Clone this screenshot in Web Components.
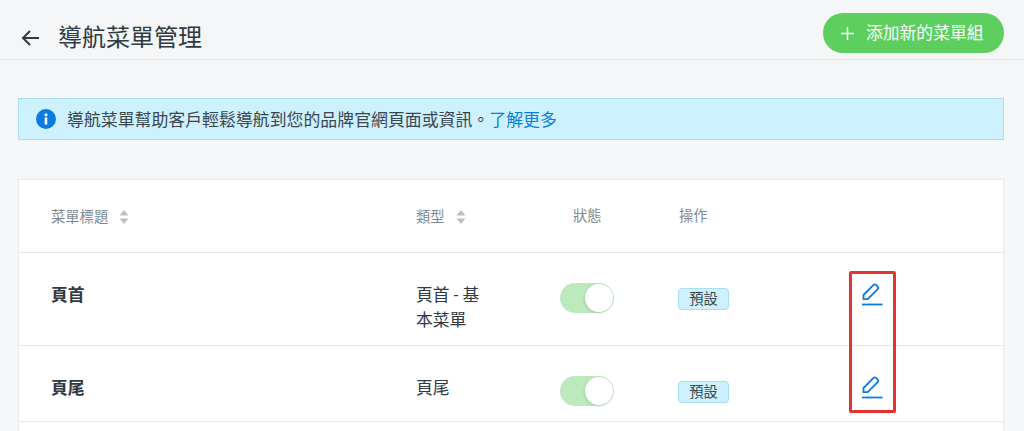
<!DOCTYPE html>
<html lang="zh-Hant"><head><meta charset="utf-8"><style>
html,body{margin:0;height:431px;overflow:hidden;background:#f4f6f8}
body{font-family:Roboto,"Noto Sans CJK TC",sans-serif;color:#2f3a42}
</style></head><body>
<menu-page></menu-page>
<script>
const FONT='Roboto,"Noto Sans CJK TC",sans-serif';
function def(name,html,init){customElements.define(name,class extends HTMLElement{constructor(){super();this.attachShadow({mode:'open'}).innerHTML=html;}connectedCallback(){init&&init(this)}});}
def('page-header',`<style>:host{display:flex;align-items:flex-start;height:59px;border-bottom:1px solid #e3e5e8;padding:0 20px;box-sizing:content-box}
.l{display:flex;align-items:center;flex:1;padding-top:22px}
h1{margin:0 0 0 18px;font:400 24px/32px ${FONT};color:#2f3a42}
svg{display:block}
.btn{display:flex;align-items:center;margin-top:13px;height:40px;width:181px;box-sizing:border-box;padding-left:18px;border-radius:20px;background:#5ccf5f;color:#fff;font:400 16.8px/24px ${FONT};gap:12px}
</style>
<div class="l"><svg width="20" height="20" viewBox="0 0 20 20" fill="none" stroke="#2f3a42" stroke-width="2"><path d="M19 10H3.5M10 3l-7 7 7 7"/></svg>
<h1><slot></slot></h1></div>
<div class="btn"><svg width="13" height="13" viewBox="0 0 13 13" stroke="#fff" stroke-width="1.5"><path d="M6.5 0v13M0 6.5h13"/></svg><span>添加新的菜單組</span></div>`);
def('info-banner',`<style>:host{display:flex;align-items:center;height:42px;box-sizing:border-box;border:1px solid #a9dcf9;background:#cdf1ff;padding-left:17px;font:400 16.9px/24px ${FONT};color:#3a464e;gap:11px}
span{position:relative;top:1px}
a{color:#0a7fe0;text-decoration:none}svg{display:block;flex:none}</style>
<svg width="20" height="20" viewBox="0 0 20 20"><circle cx="10" cy="10" r="10" fill="#0a7be0"/><rect x="8.7" y="8.5" width="2.6" height="7" rx=".5" fill="#fff"/><circle cx="10" cy="5.8" r="1.6" fill="#fff"/></svg>
<span>導航菜單幫助客戶輕鬆導航到您的品牌官網頁面或資訊。<a href="#">了解更多</a></span>`);
def('sort-head',`<style>:host{display:inline-flex;align-items:center;gap:11px;font:400 14.3px/20px ${FONT};color:#7f8a92}
svg{display:block}</style><slot></slot><svg width="10" height="14" viewBox="0 0 10 14" fill="#bcc1c5"><path d="M5 0l4.5 5.5h-9zM5 14L.5 8.5h9z"/></svg>`);
def('toggle-switch',`<style>:host{display:block;width:54px;height:30px;border-radius:15px;background:#bdeabc;position:relative}
i{position:absolute;right:1px;top:1px;width:28px;height:28px;border-radius:50%;background:#fff;box-shadow:-1px 1px 3px rgba(0,0,0,.12)}</style><i></i>`);
def('tag-badge',`<style>:host{display:block;box-sizing:border-box;width:51px;height:22px;border:1px solid #a9dcf9;border-radius:4px;background:#cdf1ff;text-align:center;font:400 14.3px/20px ${FONT};color:#3a464e}</style><slot></slot>`);
def('edit-icon',`<style>:host{display:block;width:22px;height:24px}svg{display:block}</style>
<svg width="22" height="24" viewBox="0 0 22 24" fill="none" stroke="#0a7be0" stroke-width="1.8" stroke-linejoin="round"><path d="M2.5 16.2V12L12.8 1.7a1.4 1.4 0 0 1 2 0l2.1 2.1a1.4 1.4 0 0 1 0 2L6.7 16.2z"/><path d="M1 21.5h20.5"/></svg>`);
def('table-row',`<style>:host{display:grid;grid-template-columns:365px 144px 119px 182px 1fr;padding-left:32px;border-bottom:1px solid #e6e8ea;box-sizing:border-box;font:400 16.8px/25px ${FONT};color:#2f3a42}
:host([head]){height:73px;align-items:center}
::slotted(*){min-width:0}</style><slot></slot>`);
def('menu-page',`<style>:host{display:block}.body{padding:38px 20px 0 18px}.card{margin-top:39px;background:#fff;border:1px solid #e8eaec;border-bottom:0;position:relative;height:260px}
table-row>div{box-sizing:border-box}
.name{font-weight:700;padding-top:30px}.type{padding-top:30px;width:72px}
.tg{padding-top:30px}.bd{padding-top:35px;margin-left:-1px}.ed{padding-top:30px}
.h3{padding-left:13px;font:400 14.3px/20px ${FONT};color:#7f8a92}.h4{font:400 14.3px/20px ${FONT};color:#7f8a92}
.r1{height:93px}.r2{height:76px}
.mark{position:absolute;left:830px;top:91px;width:47px;height:142px;box-sizing:border-box;border:3px solid #e8322f;border-radius:2px}
</style>
<page-header>導航菜單管理</page-header>
<div class="body"><info-banner></info-banner>
<div class="card">
<table-row head><div><sort-head>菜單標題</sort-head></div><div><sort-head>類型</sort-head></div><div class="h3">狀態</div><div class="h4">操作</div><div></div></table-row>
<table-row class="r1"><div class="name">頁首</div><div class="type">頁首 - 基本菜單</div><div class="tg"><toggle-switch></toggle-switch></div><div class="bd"><tag-badge>預設</tag-badge></div><div class="ed"><edit-icon></edit-icon></div></table-row>
<table-row class="r2"><div class="name">頁尾</div><div class="type">頁尾</div><div class="tg"><toggle-switch></toggle-switch></div><div class="bd"><tag-badge>預設</tag-badge></div><div class="ed"><edit-icon></edit-icon></div></table-row>
<div class="mark"></div>
</div></div>`);
</script></body></html>
